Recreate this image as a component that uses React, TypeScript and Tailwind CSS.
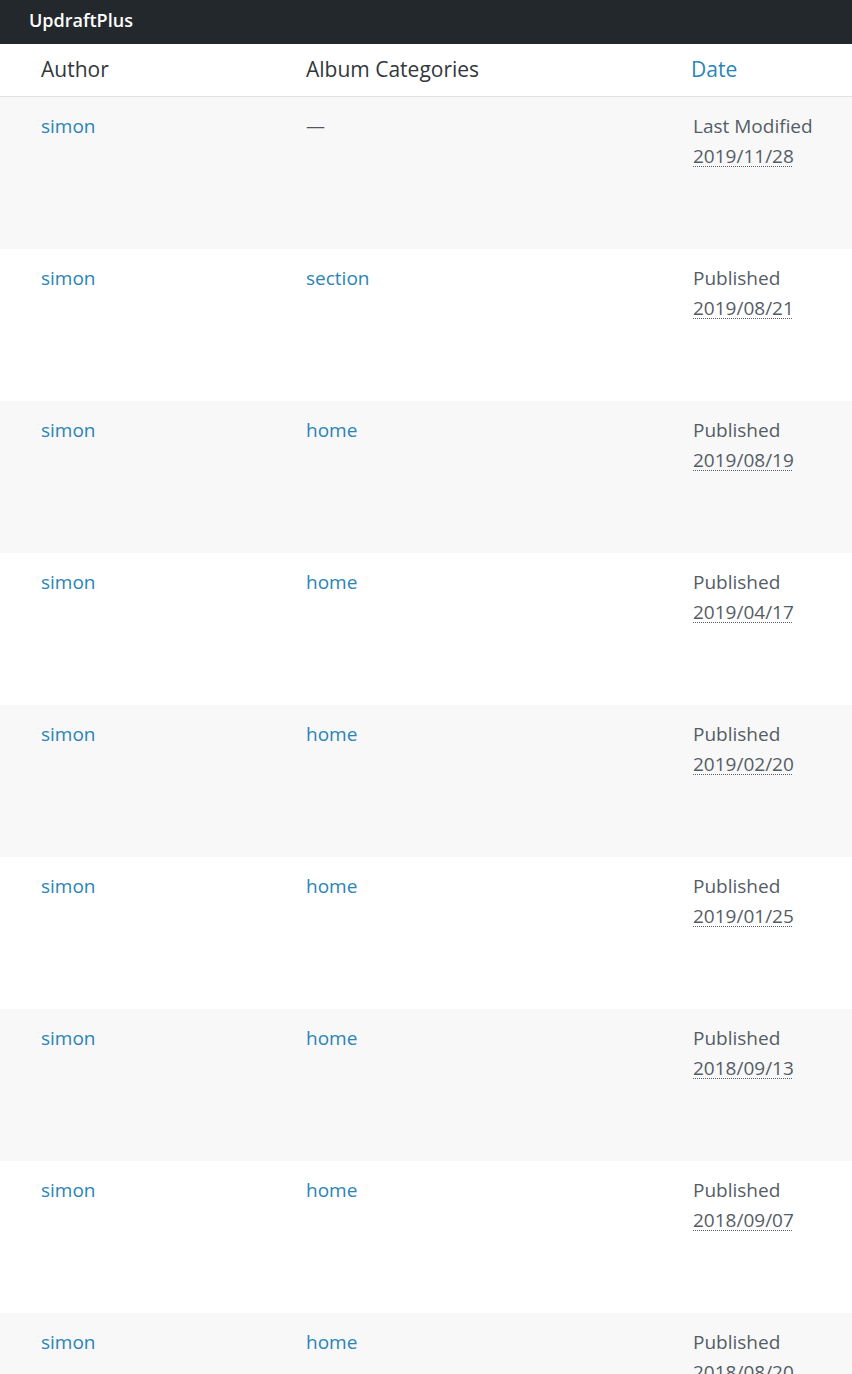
const rows = [
  { cat: "—", status: "Last Modified", date: "2019/11/28" },
  { cat: "section", status: "Published", date: "2019/08/21" },
  { cat: "home", status: "Published", date: "2019/08/19" },
  { cat: "home", status: "Published", date: "2019/04/17" },
  { cat: "home", status: "Published", date: "2019/02/20" },
  { cat: "home", status: "Published", date: "2019/01/25" },
  { cat: "home", status: "Published", date: "2018/09/13" },
  { cat: "home", status: "Published", date: "2018/09/07" },
  { cat: "home", status: "Published", date: "2018/08/20" },
];

export default function App() {
  return (
    <div className="h-[1374px] overflow-hidden bg-white font-['Open_Sans',sans-serif] text-[19px]">
      <div className="flex h-[44px] items-center bg-[#23282d] px-[29px] pb-[4px] text-[18px] font-semibold text-white">
        UpdraftPlus
      </div>

      <div className="grid h-[53px] grid-cols-[265px_385px_1fr] items-center border-b border-[#e1e2e4] pl-[41px] text-[21px] text-[#32373c] shadow-[0_1px_2px_rgba(0,0,0,0.04)]">
        <div>Author</div>
        <div>Album Categories</div>
        <div className="text-[#2b84b5]">Date</div>
      </div>

      {rows.map((row, i) => (
        <div
          key={i}
          className={`grid h-[152px] grid-cols-[265px_387px_1fr] pl-[41px] pt-[14px] leading-[30px] ${
            i % 2 === 0 ? "bg-[#f8f8f8]" : "bg-white"
          }`}
        >
          <div className="text-[#2b84b5]">simon</div>
          <div className={row.cat === "—" ? "text-[#50575e]" : "text-[#2b84b5]"}>{row.cat}</div>
          <div className="text-[#555d66]">
            <div>{row.status}</div>
            <div className="underline decoration-dotted decoration-1 underline-offset-[3px]">{row.date}</div>
          </div>
        </div>
      ))}
    </div>
  );
}
